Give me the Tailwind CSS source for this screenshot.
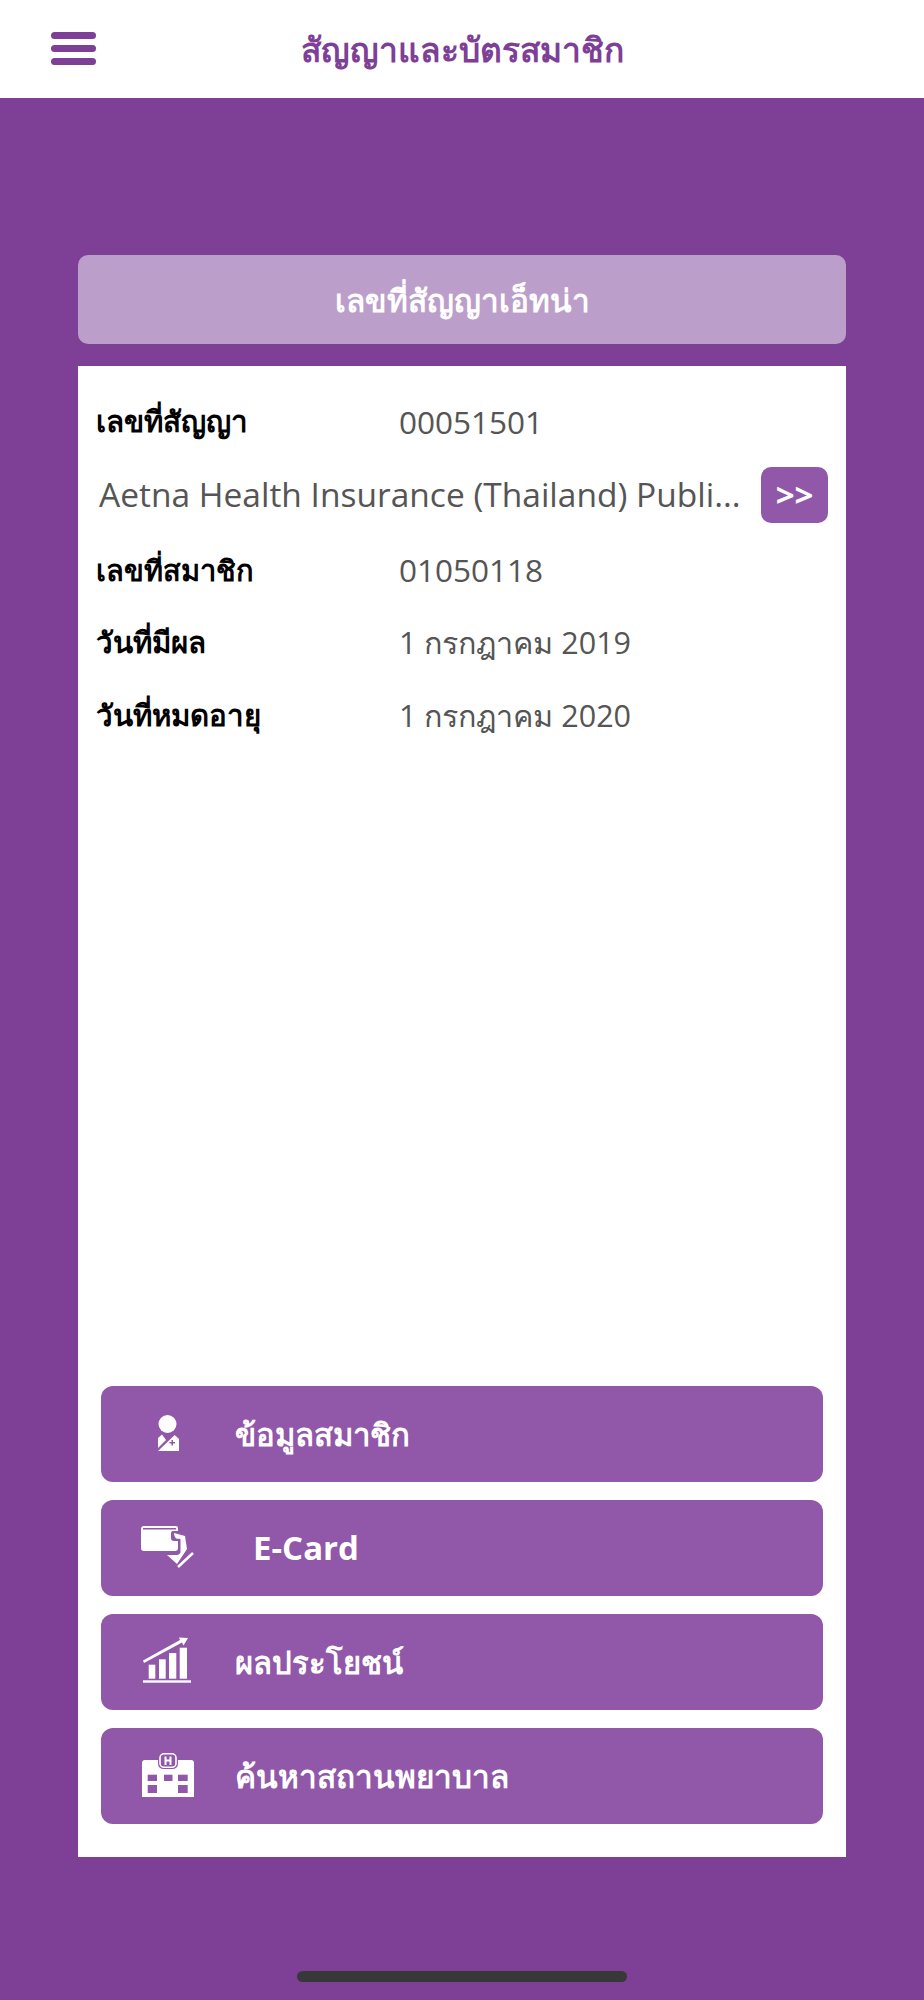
<!DOCTYPE html>
<html lang="th">
<head>
    <meta charset="UTF-8">
    <meta name="viewport" content="width=device-width, initial-scale=1.0">
    <title>สัญญาและบัตรสมาชิก</title>
    <script src="https://cdn.jsdelivr.net/npm/@tailwindcss/browser@4"></script>
</head>
<body class="bg-[#7e3f96] font-['Open_Sans','Noto_Sans',sans-serif]">
    <div class="relative h-[2000px] w-[924px] overflow-hidden">
        <!-- header -->
        <header class="flex h-[98px] items-center justify-center bg-white relative">
            <button class="absolute left-[51px] top-[32px] flex w-[45px] flex-col gap-[6px]">
                <span class="h-[7px] rounded-full bg-[#7e3f96]"></span>
                <span class="h-[7px] rounded-full bg-[#7e3f96]"></span>
                <span class="h-[7px] rounded-full bg-[#7e3f96]"></span>
            </button>
            <h1 class="text-[33.500px] font-bold text-[#7e3f96]">สัญญาและบัตรสมาชิก</h1>
        </header>

        <main class="mx-[78px] pt-[157px]">
            <div class="flex h-[89px] items-center justify-center rounded-[10px] bg-[#bc9ecb] text-[31.500px] font-bold text-white">เลขที่สัญญาเอ็ทน่า</div>

            <div class="mt-[22px] flex h-[1491px] flex-col justify-between bg-white px-[18px] pt-[19px] pb-[33px]">
                <div class="flex flex-col">
                    <div class="flex h-[73px] items-center">
                        <span class="w-[303px] text-[29.500px] font-bold text-black">เลขที่สัญญา</span>
                        <span class="text-[31.500px] text-[#555555]">00051501</span>
                    </div>
                    <div class="flex h-[73px] items-center justify-between pl-[3px]">
                        <span class="text-[33.500px] text-[#555555]">Aetna Health Insurance (Thailand) Publi...</span>
                        <button class="flex h-[56px] w-[67px] items-center justify-center rounded-[10px] bg-[#9157a8] text-[33px] font-bold text-white">&gt;&gt;</button>
                    </div>
                    <div class="mt-[2px] flex h-[73px] items-center">
                        <span class="w-[303px] text-[29px] font-bold text-black">เลขที่สมาชิก</span>
                        <span class="text-[31.500px] text-[#555555]">01050118</span>
                    </div>
                    <div class="flex h-[73px] items-center">
                        <span class="w-[303px] text-[29.500px] font-bold text-black">วันที่มีผล</span>
                        <span class="text-[30.500px] text-[#555555]">1 กรกฎาคม 2019</span>
                    </div>
                    <div class="flex h-[73px] items-center">
                        <span class="w-[303px] text-[29.500px] font-bold text-black">วันที่หมดอายุ</span>
                        <span class="text-[30.500px] text-[#555555]">1 กรกฎาคม 2020</span>
                    </div>
                </div>

                <div class="mx-[5px] flex flex-col gap-[18px]">
                    <button class="flex h-[96px] items-center rounded-[12px] bg-[#9157a8] text-left text-[31px] font-bold text-white">
                        <span class="flex w-[134px] justify-center pb-[2px]">
                            <svg width="21" height="36" viewBox="0 0 21 36" fill="#fff">
                                <circle cx="9.5" cy="9" r="9"/>
                                <path d="M0 23L4 19.500L8 25L0 33Z"/>
                                <path d="M0 36L16.700 20L21 24V36Z"/>
                                <path d="M11.500 27h2v-2h1.500v2h2v1.500h-2v2h-1.500v-2h-2z" fill="#9157a8"/>
                            </svg>
                        </span>
                        <span>ข้อมูลสมาชิก</span>
                    </button>
                    <button class="flex h-[96px] items-center rounded-[12px] bg-[#9157a8] text-left text-[33px] font-bold text-white">
                        <span class="flex w-[152px] pl-[40px] pb-[2px]">
                            <svg width="53" height="43" viewBox="0 0 53 43" fill="#fff">
                                <path d="M3 0H35Q37 0 37 2V5H32Q30 5 30 7V12Q30 15 33 15H37V22Q37 25 34 25H3Q0 25 0 22V3Q0 0 3 0Z"/>
                                <rect x="2" y="2" width="33" height="1.500" fill="#9157a8"/>
                                <path d="M33 7L44 10L46 23L36 38L26 29H36Q40 28 39.500 25V13L35 12.500Q33 11 33 7Z"/>
                                <path d="M37 41L52 27" fill="none" stroke="#fff" stroke-width="2.500"/>
                            </svg>
                        </span>
                        <span>E-Card</span>
                    </button>
                    <button class="flex h-[96px] items-center rounded-[12px] bg-[#9157a8] text-left text-[31px] font-bold text-white">
                        <span class="flex w-[134px] pl-[42px] pb-[4px]">
                            <svg width="48" height="46" viewBox="0 0 48 46" fill="#fff">
                                <path d="M0 23.500L37 3L36 0.500L45 1L40.500 8.500L39 5.500L1 26Z"/>
                                <rect x="5.700" y="27.700" width="6.600" height="14"/>
                                <rect x="16" y="22.300" width="6.700" height="19.400"/>
                                <rect x="26" y="16" width="7.300" height="25.700"/>
                                <rect x="36.700" y="10.700" width="7.300" height="31"/>
                                <rect x="0" y="43.300" width="48" height="2.400"/>
                            </svg>
                        </span>
                        <span>ผลประโยชน์</span>
                    </button>
                    <button class="flex h-[96px] items-center rounded-[12px] bg-[#9157a8] text-left text-[31.500px] font-bold text-white">
                        <span class="flex w-[134px] pl-[41px] pb-[2px]">
                            <svg width="52" height="44" viewBox="0 0 52 44" fill="#fff">
                                <path d="M3 7H16V10Q16 16 22 16H30Q36 16 36 10V7H49Q52 7 52 10V44H0V10Q0 7 3 7Z"/>
                                <rect x="18" y="0.800" width="16" height="13.500" rx="4" fill="none" stroke="#fff" stroke-width="1.600"/>
                                <path d="M22.500 3.500h2v3h3v-3h2v8.500h-2v-3.500h-3v3.500h-2z"/>
                                <g fill="#9157a8">
                                    <rect x="5.700" y="21.700" width="9.300" height="6.300"/><rect x="22" y="21.700" width="8.500" height="6.300"/><rect x="36" y="21.700" width="9.700" height="6.300"/>
                                    <rect x="5.700" y="32" width="9.300" height="8"/><rect x="36" y="32" width="9.700" height="8"/>
                                </g>
                            </svg>
                        </span>
                        <span>ค้นหาสถานพยาบาล</span>
                    </button>
                </div>
            </div>
        </main>

        <!-- home indicator -->
        <div class="absolute left-[297px] top-[1971px] h-[11px] w-[330px] rounded-full bg-[#383838]"></div>
    </div>
</body>
</html>
